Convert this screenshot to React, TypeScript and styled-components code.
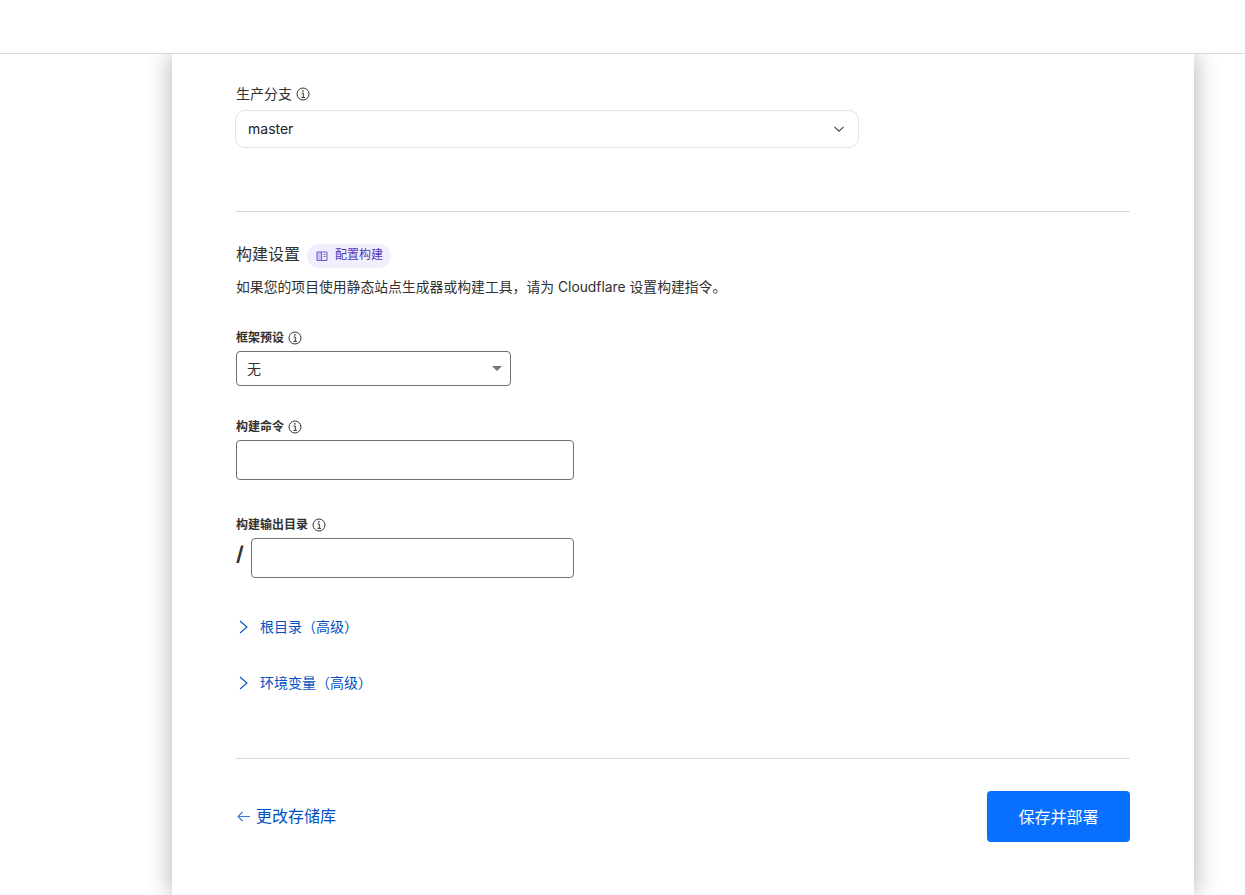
import styled, { createGlobalStyle } from 'styled-components';

const GlobalStyle = createGlobalStyle`
	html,
	body {
		margin: 0;
		height: 100%;
		background: #fff;
		overflow: hidden;
		font-family: Inter, 'Noto Sans CJK SC', sans-serif;
		color: #313131;
	}
`;

const Styles = {
	Header: styled.header`
		height: 53px;
		background: #fff;
		border-bottom: 1px solid #d9d9d9;
		position: relative;
		z-index: 1;
	`,
	Card: styled.main`
		width: 1022px;
		box-sizing: border-box;
		margin-left: 172px;
		height: 841px;
		padding: 32px 64px 0;
		background: #fff;
		box-shadow: 0 0 24px rgba(0, 0, 0, 0.32);
	`,
	RepoField: styled.section`
		height: 125px;
	`,
	RepoLabel: styled.div`
		display: flex;
		align-items: center;
		gap: 4px;
		height: 16px;
		margin-bottom: 8px;
		font-size: 14px;
		line-height: 16px;
	`,
	RepoSelect: styled.div`
		display: flex;
		align-items: center;
		justify-content: space-between;
		width: 624px;
		height: 38px;
		box-sizing: border-box;
		margin-left: -1px;
		padding: 0 14px 0 12px;
		border: 1px solid #e3e3e3;
		border-radius: 10px;
		font-size: 14px;
		color: #222;
	`,
	RepoValue: styled.span`
		line-height: 16px;
		margin-bottom: 1px;
	`,
	Divider: styled.hr`
		margin: 0;
		border: 0;
		border-top: 1px solid #d9d9d9;
	`,
	TitleRow: styled.div`
		display: flex;
		align-items: center;
		gap: 7px;
		height: 24px;
		margin-top: 32px;
		font-size: 16px;
		line-height: 20px;
	`,
	TitleText: styled.span`
		margin-bottom: 4px;
	`,
	Pill: styled.span`
		display: inline-flex;
		align-items: center;
		gap: 7px;
		height: 24px;
		padding: 0 8px 0 9px;
		border-radius: 12px;
		background: #f1effd;
		color: #4f34b8;
		font-size: 12px;
		line-height: 20px;
	`,
	PillText: styled.span`
		margin-bottom: 2px;
	`,
	Description: styled.p`
		margin: 9px 0 0;
		font-size: 13.84px;
		line-height: 20px;
	`,
	Field: styled.div<{ $top: number }>`
		margin-top: ${(p) => p.$top}px;
	`,
	FieldLabel: styled.label`
		display: flex;
		align-items: center;
		gap: 4px;
		height: 16px;
		margin-bottom: 5px;
		font-size: 12px;
		font-weight: 700;
		line-height: 16px;
	`,
	FrameworkSelect: styled.div`
		position: relative;
		display: flex;
		align-items: center;
		width: 275px;
		height: 35px;
		box-sizing: border-box;
		padding: 0 0 2px 10px;
		border: 1px solid #6f6f6f;
		border-radius: 4px;
		font-size: 14px;
		&::after {
			content: '';
			position: absolute;
			right: 8px;
			top: 14px;
			border-left: 5px solid transparent;
			border-right: 5px solid transparent;
			border-top: 5px solid #72767b;
		}
	`,
	InputRow: styled.div`
		display: flex;
		align-items: center;
		gap: 8px;
		width: 338px;
	`,
	Slash: styled.span`
		width: 7px;
		margin-bottom: 8px;
		font-size: 20px;
		font-weight: 700;
	`,
	Input: styled.input`
		flex: 1;
		min-width: 0;
		height: 40px;
		box-sizing: border-box;
		border: 1px solid #6f6f6f;
		border-radius: 4px;
		background: #fff;
		outline: none;
	`,
	Disclosure: styled.div<{ $top: number }>`
		display: flex;
		align-items: center;
		gap: 12px;
		height: 20px;
		margin-top: ${(p) => p.$top}px;
		padding-left: 3px;
		font-size: 14px;
		color: #0051c3;
	`,
	Footer: styled.footer`
		display: flex;
		align-items: center;
		justify-content: space-between;
		padding-top: 32px;
		margin-top: 66px;
		border-top: 1px solid #d9d9d9;
	`,
	BackLink: styled.a`
		display: flex;
		align-items: center;
		gap: 6px;
		margin-bottom: 3px;
		padding-left: 1px;
		font-size: 16px;
		color: #0051c3;
	`,
	BackArrow: styled.span`
		display: flex;
		margin-top: 3px;
	`,
	SaveButton: styled.button`
		width: 143px;
		height: 51px;
		padding: 0 0 2px;
		border: 0;
		border-radius: 4px;
		background: #086fff;
		color: #fff;
		font-family: inherit;
		font-size: 16px;
	`,
};

const InfoIcon = () => (
	<svg width="14" height="14" viewBox="0 0 14 14" fill="none" stroke="#333" strokeWidth="1">
		<circle cx="7" cy="7" r="6" />
		<path d="M5.6 6H7.3V10.2M5.4 10.4H9" />
		<circle cx="6.9" cy="3.9" r="0.8" fill="#333" stroke="none" />
	</svg>
);

const ChevronDown = () => (
	<svg width="10" height="6" viewBox="0 0 10 6" fill="none" stroke="#444" strokeWidth="1.1">
		<path d="M0.5 0.8L5 5.2L9.5 0.8" />
	</svg>
);

const ChevronRight = () => (
	<svg width="9" height="16" viewBox="0 0 9 16" fill="none" stroke="#0051c3" strokeWidth="1.1">
		<path d="M1 3L8 9L1 15" />
	</svg>
);

const ArrowLeft = () => (
	<svg width="13" height="11" viewBox="0 0 13 11" fill="none" stroke="#3d7bd6" strokeWidth="1.1">
		<path d="M13 5.5H1M5.5 1L1 5.5L5.5 10" />
	</svg>
);

const BookIcon = () => (
	<svg width="12" height="12" viewBox="0 0 12 12" fill="none" stroke="#6a58d8" strokeWidth="1">
		<path d="M1 2H5.5V10.5H1Z" fill="#c9c2f3" />
		<path d="M5.5 2H11V10.5H5.5ZM7.5 4.5H9.5M7.5 6.5H9.5" />
	</svg>
);

export default function App() {
	return (
		<>
			<GlobalStyle />
			<Styles.Header />
			<Styles.Card>
				<Styles.RepoField>
					<Styles.RepoLabel>
						生产分支 <InfoIcon />
					</Styles.RepoLabel>
					<Styles.RepoSelect>
						<Styles.RepoValue>master</Styles.RepoValue>
						<ChevronDown />
					</Styles.RepoSelect>
				</Styles.RepoField>
				<Styles.Divider />
				<Styles.TitleRow>
					<Styles.TitleText>构建设置</Styles.TitleText>
					<Styles.Pill>
						<BookIcon />
						<Styles.PillText>配置构建</Styles.PillText>
					</Styles.Pill>
				</Styles.TitleRow>
				<Styles.Description>
					如果您的项目使用静态站点生成器或构建工具，请为 Cloudflare 设置构建指令。
				</Styles.Description>
				<Styles.Field $top={33}>
					<Styles.FieldLabel>
						框架预设 <InfoIcon />
					</Styles.FieldLabel>
					<Styles.FrameworkSelect>无</Styles.FrameworkSelect>
				</Styles.Field>
				<Styles.Field $top={33}>
					<Styles.FieldLabel>
						构建命令 <InfoIcon />
					</Styles.FieldLabel>
					<Styles.InputRow>
						<Styles.Input />
					</Styles.InputRow>
				</Styles.Field>
				<Styles.Field $top={37}>
					<Styles.FieldLabel>
						构建输出目录 <InfoIcon />
					</Styles.FieldLabel>
					<Styles.InputRow>
						<Styles.Slash>/</Styles.Slash>
						<Styles.Input />
					</Styles.InputRow>
				</Styles.Field>
				<Styles.Disclosure $top={38}>
					<ChevronRight />
					根目录（高级）
				</Styles.Disclosure>
				<Styles.Disclosure $top={36}>
					<ChevronRight />
					环境变量（高级）
				</Styles.Disclosure>
				<Styles.Footer>
					<Styles.BackLink>
						<Styles.BackArrow>
							<ArrowLeft />
						</Styles.BackArrow>
						更改存储库
					</Styles.BackLink>
					<Styles.SaveButton>保存并部署</Styles.SaveButton>
				</Styles.Footer>
			</Styles.Card>
		</>
	);
}
